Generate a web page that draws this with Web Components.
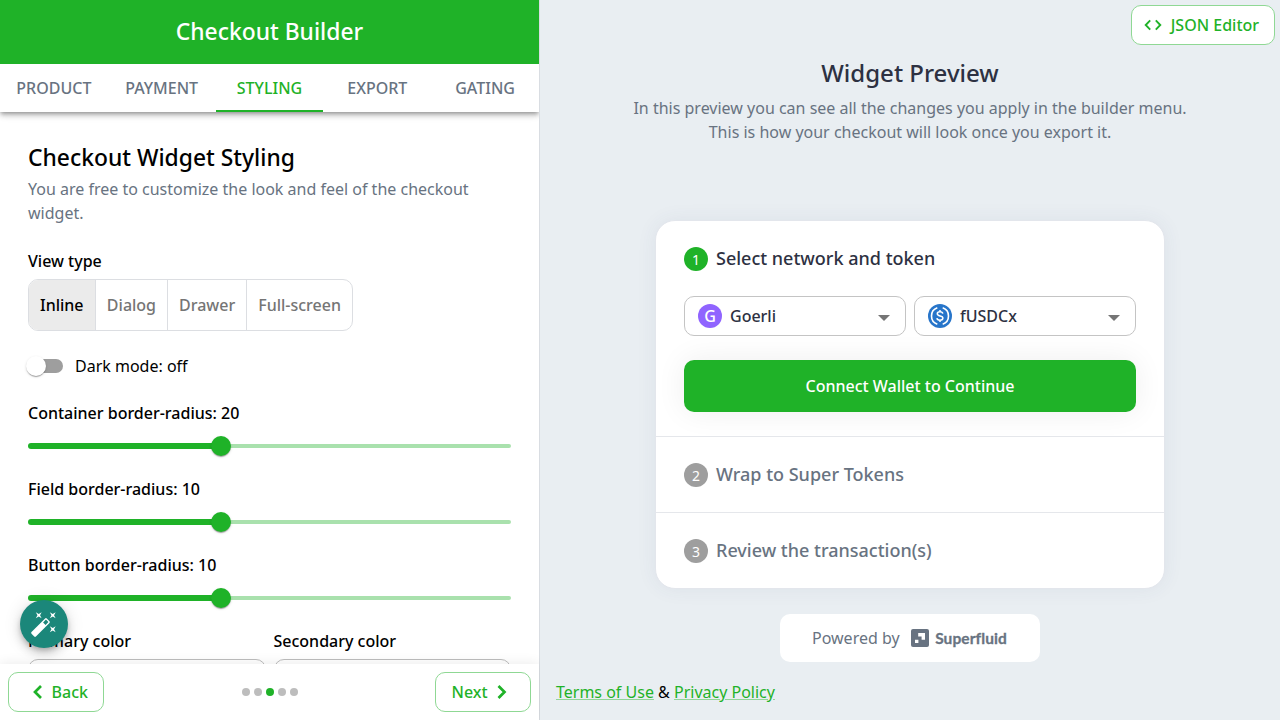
<!DOCTYPE html>
<html lang="en">
<head>
<meta charset="utf-8">
<title>Checkout Builder</title>
<style>
html,body{margin:0;height:100%;overflow:hidden}
body{font:400 16px/24px "Noto Sans",sans-serif;color:#000;--green:#1fb228;--grey:#687381;--ink:#2d3142;--line:#e5e7eb}
</style>
</head>
<body>
<checkout-app></checkout-app>
<script>
const define = (name, css, html) => customElements.define(name, class extends HTMLElement {
  constructor() {
    super();
    const attr = k => this.getAttribute(k) || '';
    this.attachShadow({mode: 'open'}).innerHTML =
      `<style>*{box-sizing:border-box}:host{box-sizing:border-box}${css}</style>` + (typeof html === 'function' ? html(attr) : html);
  }
});

define('outline-button', `
:host{display:block;height:40px}
button{display:flex;align-items:center;justify-content:flex-start;width:100%;height:100%;padding:0 0 0 var(--start);margin:0;background:#fff;border:1px solid #8fd894;border-radius:10px;color:var(--green);font:500 16px/24px "Noto Sans",sans-serif;gap:var(--gap,8px)}
::slotted(svg){display:block;flex:none}`, `<button><slot></slot></button>`);

define('builder-header', `
:host{display:block;flex:none;position:relative;box-shadow:0 2px 4px -1px rgba(0,0,0,.3),0 4px 5px rgba(0,0,0,.14),0 1px 10px rgba(0,0,0,.12);clip-path:inset(0 0 -14px 0)}
h1{margin:0;height:64px;line-height:64px;text-align:center;color:#fff;background:var(--green);font-weight:500;font-size:22.85px}
nav{display:flex;height:48px;background:#fff}
span{flex:1;text-align:center;line-height:48px;font-weight:500;color:var(--grey)}
span.on{color:var(--green);box-shadow:inset 0 -2px var(--green)}`, `
<h1>Checkout Builder</h1>
<nav><span>PRODUCT</span><span>PAYMENT</span><span class="on">STYLING</span><span>EXPORT</span><span>GATING</span></nav>`);

define('view-toggle', `
:host{display:flex;width:325px;height:52px;margin:6px 0 23px;border:1px solid #dcdee2;border-radius:10px;overflow:hidden}
span{padding:0 11px;line-height:50px;font-weight:500;color:#757575;border-left:1px solid #dcdee2;white-space:nowrap}
span:first-of-type{border:0;background:#ebebeb;color:#000;padding-right:11.3px}`,
`<span>Inline</span><span>Dialog</span><span>Drawer</span><span>Full-screen</span>`);

define('mode-switch', `
:host{display:flex;align-items:center;height:24px;gap:12px;margin-bottom:23px}
i{display:flex;align-items:center;width:35px;height:14px;border-radius:7px;background:#9e9e9e}
i::before{content:"";width:20px;height:20px;flex:none;margin-left:-2px;border-radius:50%;background:#fff;box-shadow:0 2px 1px -1px rgba(0,0,0,.2),0 1px 1px rgba(0,0,0,.14),0 1px 3px rgba(0,0,0,.12)}`,
`<i></i><slot></slot>`);

define('radius-slider', `
:host{display:block;height:76px}
label{display:block;font-weight:500;height:24px}
div{display:flex;align-items:center;height:42px}
b{flex:0 0 193px;height:6px;border-radius:3px 0 0 3px;background:var(--green)}
u{flex:1;height:4px;border-radius:0 2px 2px 0;background:#a9e1ad}
i{flex:none;width:20px;height:20px;margin:0 -10px;z-index:1;border-radius:50%;background:var(--green);box-shadow:0 2px 1px -1px rgba(0,0,0,.2),0 1px 1px rgba(0,0,0,.14),0 1px 3px rgba(0,0,0,.12)}`,
`<label><slot></slot></label><div><b></b><i></i><u></u></div>`);

define('color-field', `
:host{display:block;flex:1;font-weight:500}
div{height:40px;margin-top:6px;border:1px solid #bdbdbd;border-radius:10px}`, `<slot></slot><div></div>`);

define('step-footer', `
:host{display:flex;flex:none;align-items:center;justify-content:space-between;height:56px;padding:0 8px;background:#fff;position:relative;box-shadow:0 0 12px rgba(0,0,0,.09)}
outline-button{width:96px}
.dots{display:flex;gap:4px}
.dots i{width:8px;height:8px;border-radius:50%;background:#bdbdbd}
.dots i.on{background:var(--green)}`, `
<outline-button style="--start:19px;--gap:4.600px"><svg width="19" height="24" viewBox="2.500 0 19 24"><path d="M15.500 6 9.500 12l6 6" fill="none" stroke="#1fb228" stroke-width="2.700"/></svg>Back</outline-button>
<div class="dots"><i></i><i></i><i class="on"></i><i></i><i></i></div>
<outline-button style="--start:15.600px;--gap:4.600px"><span>Next</span><svg width="20" height="24" viewBox="2 0 20 24"><path d="m8.500 6 6 6-6 6" fill="none" stroke="#1fb228" stroke-width="2.700"/></svg></outline-button>`);

define('magic-fab', `
:host{display:flex;align-items:center;justify-content:center;position:absolute;left:20px;top:600px;width:48px;height:48px;border-radius:50%;background:#1b877a;box-shadow:0 3px 5px -1px rgba(0,0,0,.2),0 6px 10px rgba(0,0,0,.14),0 1px 18px rgba(0,0,0,.12)}`, `
<svg width="28" height="28" viewBox="0 0 24 24" fill="#fff"><path d="m7.500 5.600 2.500 1.400-1.400-2.500L10 2 7.500 3.400 5 2l1.400 2.500L5 7zM19.500 15.400 17 14l1.400 2.500L17 19l2.500-1.400L22 19l-1.400-2.500L22 14zM22 2l-2.500 1.400L17 2l1.400 2.500L17 7l2.500-1.400L22 7l-1.400-2.500zM14.370 7.290a1 1 0 0 0-1.410 0L1.290 18.960a1 1 0 0 0 0 1.410l2.340 2.340a1 1 0 0 0 1.410 0L16.700 11.050a1 1 0 0 0 0-1.410zM13.340 12.780l-2.120-2.120 2.440-2.440 2.120 2.120z"/></svg>`);

define('builder-panel', `
:host{display:flex;flex-direction:column;width:540px;height:720px;flex:none;background:#fff;border-right:1px solid #d9dde2;position:relative}
main{flex:1;min-height:0;overflow:hidden;padding:29px 28px 0}
h2{margin:0;font-weight:500;font-size:22.85px;line-height:34px;height:36px}
p{margin:0 0 24px;color:var(--grey)}
.label{font-weight:500}
.fields{display:flex;gap:8px}`, `
<builder-header></builder-header>
<main>
<h2>Checkout Widget Styling</h2>
<p>You are free to customize the look and feel of the checkout widget.</p>
<div class="label">View type</div>
<view-toggle></view-toggle>
<mode-switch>Dark mode: off</mode-switch>
<radius-slider>Container border-radius: 20</radius-slider>
<radius-slider>Field border-radius: 10</radius-slider>
<radius-slider>Button border-radius: 10</radius-slider>
<div class="fields"><color-field>Primary color</color-field><color-field>Secondary color</color-field></div>
</main>
<step-footer></step-footer>
<magic-fab></magic-fab>`);

define('select-box', `
:host{display:flex;flex:1;align-items:center;height:40px;padding:0 13px;gap:8px;border:1px solid #c4c4c4;border-radius:10px;font-weight:500;background:#fff}
.arrow{margin:3px 2px 0 auto;border:6px solid transparent;border-top-color:#757575;border-bottom:0}`,
`<slot name="icon"></slot><slot></slot><i class="arrow"></i>`);

define('step-head', `
:host{display:flex;align-items:center;gap:8px;font-weight:500;font-size:18px;line-height:28px;height:28px}
i{display:block;width:24px;height:24px;margin-top:1px;border-radius:50%;background:var(--dot,#9e9e9e);color:#fff;font:400 14px/25px "Noto Sans",sans-serif;text-align:center}`,
a => `<i>${a('n')}</i><slot></slot>`);

define('checkout-widget', `
:host{display:block;width:510px;height:369px;margin-top:76px;background:#fff;border:1px solid #e3e6ec;border-radius:20px;color:var(--ink);box-shadow:0 0 20px rgba(60,70,110,.07)}
.open{height:215px;padding:23px 28px 0}
.selects{display:flex;gap:8px;margin:24px 0 24px}
.letter{width:24px;height:24px;border-radius:50%;background:#9064ff;color:#fff;line-height:24px;text-align:center}
button{display:block;width:100%;height:52px;padding:0;border:0;border-radius:10px;background:var(--green);color:#fff;font:500 16px/24px "Noto Sans",sans-serif;box-shadow:0 0 30px rgba(0,0,0,.07)}
.row{height:76px;border-top:1px solid var(--line);padding:23px 28px 0;color:var(--grey)}`, `
<div class="open">
<step-head n="1" style="--dot:var(--green)">Select network and token</step-head>
<div class="selects">
<select-box><span slot="icon" class="letter">G</span>Goerli</select-box>
<select-box><svg slot="icon" width="24" height="24" viewBox="0 0 24 24"><circle cx="12" cy="12" r="12" fill="#2775ca"/><g fill="none" stroke="#fff"><path d="M9.300 3.800a8.700 8.700 0 0 0 0 16.400M14.700 3.800a8.700 8.700 0 0 1 0 16.400" stroke-width="1.600"/><path d="M14.800 9.700c-.2-1.200-1.200-1.900-2.800-1.900-1.700 0-2.700.8-2.700 2 0 3 5.600 1.300 5.600 4.300 0 1.300-1.100 2.100-2.900 2.100s-2.900-.7-3.100-2.100M12 5.900v2M12 16v2" stroke-width="1.500"/></g></svg>fUSDCx</select-box>
</div>
<button>Connect Wallet to Continue</button>
</div>
<div class="row"><step-head n="2">Wrap to Super Tokens</step-head></div>
<div class="row"><step-head n="3">Review the transaction(s)</step-head></div>`);

define('powered-by', `
:host{display:flex;align-items:center;width:260px;height:48px;margin-top:25px;padding-left:32px;border-radius:10px;background:#fff;color:var(--grey)}
svg{display:block;margin:0 6.500px 0 11px}
b{font:700 15.500px/20px Lato,sans-serif;-webkit-text-stroke:.3px currentColor;letter-spacing:.1px}`, `
<span>Powered by</span>
<svg width="18" height="18" viewBox="0 0 18 18"><rect width="18" height="18" rx="2" fill="#687381"/><path d="M7.200 4H14v6.800h-3.400V7.400H7.200zM4 10.800h3.400v3.300H4z" fill="#fff"/></svg>
<b>Superfluid</b>`);

define('preview-panel', `
:host{display:flex;flex:1;flex-direction:column;align-items:center;height:720px;background:#e9eef2;position:relative}
.top{display:flex;justify-content:flex-end;width:100%;height:45px;padding:5px 5px 0 0}
outline-button{width:144px}
h2{margin:10px 0 3px;font-size:24px;line-height:36px;height:38px;font-weight:500;color:var(--ink)}
p{margin:0;text-align:center;color:var(--grey)}
footer{align-self:stretch;padding:18px 16px 0}
a{color:var(--green);text-decoration:underline;text-decoration-color:#90d597}`, `
<div class="top"><outline-button style="--start:11px;--gap:7.700px"><svg width="20" height="20" viewBox="0 0 20 20"><path d="M7.200 5.300 2.700 10l4.500 4.700M12.800 5.300l4.500 4.700-4.500 4.700" fill="none" stroke="#1fb228" stroke-width="1.900"/></svg>JSON Editor</outline-button></div>
<h2>Widget Preview</h2>
<p>In this preview you can see all the changes you apply in the builder menu.<br>This is how your checkout will look once you export it.</p>
<checkout-widget></checkout-widget>
<powered-by></powered-by>
<footer><a>Terms of Use</a> &amp; <a>Privacy Policy</a></footer>`);

define('checkout-app', `:host{display:flex;width:1280px;height:720px;overflow:hidden}`,
`<builder-panel></builder-panel><preview-panel></preview-panel>`);
</script>
</body>
</html>
